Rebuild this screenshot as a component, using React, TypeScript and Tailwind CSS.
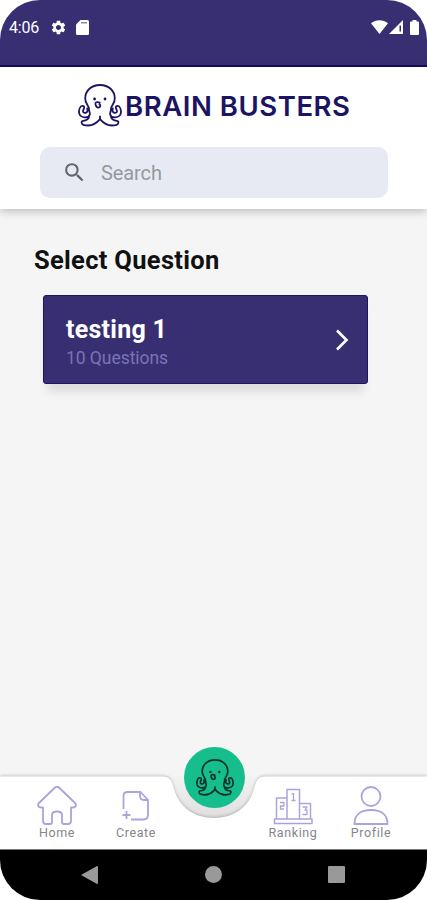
import type { ReactNode } from "react"
import { MdSearch, MdSettings } from "react-icons/md"

function Octopus({ className, stroke = 1.8 }: { className?: string; stroke?: number }) {
  return (
    <svg
      viewBox="0 0 44 44"
      fill="none"
      stroke="currentColor"
      strokeWidth={stroke}
      strokeLinecap="round"
      strokeLinejoin="round"
      className={className}
      aria-hidden="true"
    >
      {/* head */}
      <path d="M10.8 24.5C10.8 21 7.2 20 7.2 14.5C7.2 6.5 13.5 1 22 1S36.8 6.5 36.8 14.5C36.8 20 33.2 21 33.2 24.5" />
      {/* raised arms */}
      <path d="M10.8 24.5C10.8 27 12.2 28 11.8 30.5C11.3 32.8 9.5 33.5 7 33.4C2.5 33.2 .8 30.5 1 27.5C1.2 24.8 2.6 21.8 4.4 21.8C7.6 21.8 5.8 24.5 5.2 26.2C4.6 28.3 6 29.2 7.6 28.8C9.6 28.3 9.8 26.5 9.2 24.4" />
      <path d="M33.2 24.5C33.2 27 31.8 28 32.2 30.5C32.7 32.8 34.5 33.5 37 33.4C41.5 33.2 43.2 30.5 43 27.5C42.8 24.8 41.4 21.8 39.6 21.8C36.4 21.8 38.2 24.5 38.8 26.2C39.4 28.3 38 29.2 36.4 28.8C34.4 28.3 34.2 26.5 34.8 24.4" />
      {/* legs */}
      <path d="M11 33C10 36.5 7.5 36.6 5 36.8C2.8 37.2 3.2 40.4 6 41C13 42.8 18 40 22 35.2C26 40 31 42.8 38 41C40.8 40.4 41.2 37.2 39 36.8C36.5 36.6 34 36.5 33 33" />
      <path d="M22 32.5V35" />
      <path d="M21.8 18.6C18.5 17.4 17 18.4 17.5 20.5C18 22.2 18.6 23.6 20.2 23.6C22.4 23.6 23 20.8 21.4 20.4" />
      <circle cx="16.6" cy="15" r="1.4" fill="currentColor" stroke="none" />
      <circle cx="27" cy="15" r="1.4" fill="currentColor" stroke="none" />
    </svg>
  )
}

function StatusBar() {
  return (
    <div className="flex h-[67px] shrink-0 items-start justify-between border-b-2 border-[#130b63] bg-[#382f73] pt-[18px] pr-[8px] pl-[9px] text-white">
      <div className="flex h-[19px] items-center">
        <span className="w-[31px] text-[16px] leading-[19px] tracking-[-0.2px]">4:06</span>
        <MdSettings className="ml-[10px] size-[17px]" />
        <svg viewBox="0 0 13 15" className="ml-[9px] h-[15px] w-[13px]" fill="currentColor">
          <path d="M4.5 0H11.5Q13 0 13 1.5V13.5Q13 15 11.5 15H1.5Q0 15 0 13.5V4.5Z" />
          <path d="M5 2H11V3.4H5Z" className="fill-[#8b86ad]" />
        </svg>
      </div>
      <div className="flex h-[18px] items-center">
        <svg viewBox="0 0 17 14" className="h-[14px] w-[17px]" fill="currentColor">
          <path d="M0 3.2C5-.8 12-.8 17 3.2L8.5 14Z" />
        </svg>
        <svg viewBox="0 0 14 14" className="ml-px h-[14px] w-[14px]" fill="currentColor">
          <path d="M0 14L14 0V14Z" />
          <path d="M10.5 5.5H12V11.5H10.5Z" className="fill-[#382f73]" />
        </svg>
        <svg viewBox="0 0 9 15" className="ml-[7px] h-[15px] w-[9px]" fill="currentColor">
          <path d="M2.5 0H6.5V1.5H8Q9 1.5 9 2.5V14Q9 15 8 15H1Q0 15 0 14V2.5Q0 1.5 1 1.5H2.5Z" />
        </svg>
      </div>
    </div>
  )
}

function Header() {
  return (
    <header className="z-10 flex h-[142px] shrink-0 flex-col bg-white pt-[17px] shadow-[0_2px_9px_rgba(0,0,0,0.25)]">
      <div className="flex h-[44px] items-center pl-[78px] text-[#1b1464]">
        <Octopus className="size-[44px]" />
        <h1 className="ml-[3px] font-['Inter'] text-[27.5px] leading-[42px] font-semibold tracking-[0.55px] whitespace-nowrap">
          BRAIN BUSTERS
        </h1>
      </div>
      <div className="mt-[19px] mr-[39px] ml-[40px] flex h-[51px] items-center rounded-[10px] bg-[#e8eaf3] pl-[22px]">
        <MdSearch className="size-[25px] text-[#62646a]" />
        <span className="ml-[14px] text-[20px] tracking-[-0.1px] text-[#96989f]">Search</span>
      </div>
    </header>
  )
}

function QuestionCard({ title, count }: { title: string; count: number }) {
  return (
    <div className="mt-[20px] mr-[59px] ml-[43px] flex h-[89px] items-center justify-between rounded-[3px] border border-[#1d1265] bg-[#382f73] pr-[18px] pl-[22px] shadow-[0_12px_9px_-4px_rgba(0,0,0,0.1)]">
      <div className="pt-[7px]">
        <p className="text-[25px] leading-[30px] font-bold tracking-[0.25px] text-white">{title}</p>
        <p className="text-[17.5px] leading-[26px] tracking-[-0.05px] text-[#7b72b7]">{count} Questions</p>
      </div>
      <svg viewBox="0 0 14 22" className="h-[22px] w-[14px]" fill="none" stroke="white" strokeWidth="2.6">
        <path d="M2 1.5L11.5 11L2 20.5" />
      </svg>
    </div>
  )
}

function NavItem({ label, children }: { label: string; children: ReactNode }) {
  return (
    <div className="flex w-[78px] flex-col items-center">
      <svg
        viewBox="0 0 40 40"
        className="size-[40px] text-[#aaa4dc]"
        fill="none"
        stroke="currentColor"
        strokeWidth="1.8"
        strokeLinejoin="round"
      >
        {children}
      </svg>
      <span className="text-[12.5px] leading-[14px] tracking-[0.6px] text-[#85858a]">{label}</span>
    </div>
  )
}

function BottomNav() {
  return (
    <nav className="relative h-[73px] shrink-0">
      {/* white bar with the notch cut out for the center button */}
      <svg viewBox="0 0 427 77" className="absolute -top-1 left-0 h-[77px] w-[427px] overflow-visible">
        <defs>
          <linearGradient id="notch" x1="0" y1="0" x2="0" y2="1">
            <stop offset="0" stopColor="#f4f4f4" />
            <stop offset="1" stopColor="#dededf" />
          </linearGradient>
        </defs>
        <path d="M166 4H262V47H166Z" fill="url(#notch)" />
        <path
          d="M0 4.5H162C170 4.5 172 9 174 17C179 35 194 46 214 46S249 35 254 17C256 9 258 4.5 266 4.5H427V77H0Z"
          className="fill-white drop-shadow-[0_-1px_1.5px_rgba(0,0,0,0.2)]"
        />
      </svg>
      <div className="relative flex h-full justify-between pt-[10px] pr-[17px] pl-[18px]">
        <div className="flex gap-px">
          <NavItem label="Home">
            <path d="M18 1.5Q20 0 22 1.5L38 17C40 19 38.5 21.5 36 21.5H34V35Q34 38 31 38H27Q25 38 25 36V29Q25 25.5 20 25.5T15 29V36Q15 38 13 38H9Q6 38 6 35V21.5H4C1.5 21.5 0 19 2 17Z" />
          </NavItem>
          <NavItem label="Create">
            <path d="M7.5 23V10Q7.5 6 11.5 6H24.5L32 14V29Q32 33.5 27.5 33.5H15" />
            <path d="M24 6V10Q24 14 28 14H32M10.5 25V33M6.5 29H14.5" />
          </NavItem>
        </div>
        <div className="flex">
          <NavItem label="Ranking">
            <g strokeWidth="1.5">
              <path d="M1.5 33H39V37.5H1.5ZM3.5 33V12H14M14 33V3.5H26.5V33M26.5 17.5H37.5V33" />
              <path
                d="M7 16.5H11V20H7.5V23H11M18.5 8.5L20.5 7.5V14M18.5 14.5H22.5M29.5 21H34L32 24H34V28.5H29.5"
                strokeWidth="1.3"
              />
            </g>
          </NavItem>
          <NavItem label="Profile">
            <circle cx="20" cy="10.5" r="9.5" />
            <path d="M3.5 38C3.5 28.5 10 24 20 24S36.5 28.5 36.5 38Z" />
          </NavItem>
        </div>
      </div>
      <button
        className="absolute -top-[29px] left-[184px] flex size-[61px] items-center justify-center rounded-full bg-[#16bd8d] text-[#06302a]"
        aria-label="Play"
      >
        <Octopus className="size-[38px]" stroke={1.9} />
      </button>
    </nav>
  )
}

function SystemNav() {
  return (
    <div className="z-10 flex h-[51px] shrink-0 items-center justify-between border-t border-[#777] bg-black pr-[82px] pb-px pl-[81px]">
      <svg viewBox="0 0 17 18" className="h-[18px] w-[17px] fill-[#999]">
        <path d="M0 9L16 0Q17 0 17 1V17Q17 18 16 18Z" />
      </svg>
      <span className="size-[17px] rounded-full bg-[#999]" />
      <span className="size-[17px] rounded-[1px] bg-[#999]" />
    </div>
  )
}

export default function App() {
  return (
    <div className="h-[900px] w-[427px] bg-white font-['Roboto',sans-serif]">
      <div className="flex h-full flex-col overflow-hidden rounded-[40px] bg-[#f5f5f5]">
        <StatusBar />
        <Header />
        <main className="flex-1 pt-[36px]">
          <h2 className="ml-[34px] text-[25.5px] leading-[30px] font-bold tracking-[0.3px] text-[#111]">
            Select Question
          </h2>
          <QuestionCard title="testing 1" count={10} />
        </main>
        <BottomNav />
        <SystemNav />
      </div>
    </div>
  )
}
